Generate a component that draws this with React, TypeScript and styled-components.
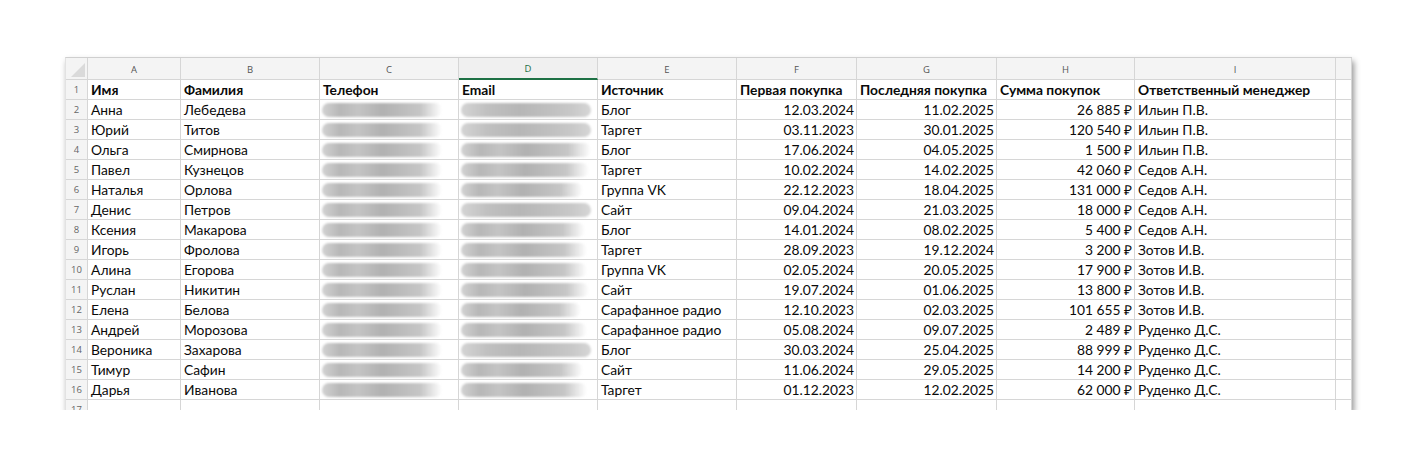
import React from 'react';
import styled, { createGlobalStyle } from 'styled-components';

const GlobalStyle = createGlobalStyle`
  body {
    margin: 0;
    background: #ffffff;
    font-family: Lato, "Liberation Sans", sans-serif;
  }
`;

const COLS = [22, 93, 139, 139, 139, 139, 120, 140, 138, 201, 16];
const LETTERS = ['A', 'B', 'C', 'D', 'E', 'F', 'G', 'H', 'I', ''];

const Page = styled.div`
  padding: 57px 0 0 65px;
`;

const Sheet = styled.div`
  width: 1286px;
  height: 352px;
  overflow: hidden;
  background: #fff;
  border-top: 1px solid #cfcfcf;
  border-left: 1px solid #e2e2e2;
  box-shadow: 2px 4px 6px rgba(0, 0, 0, 0.42);
  display: grid;
  grid-template-columns: ${COLS.map((c) => `${c}px`).join(' ')};
  grid-auto-rows: 20px;
  grid-template-rows: 22px;
`;

const Corner = styled.div`
  background: #f4f4f4;
  border-right: 1px solid #d6d6d6;
  border-bottom: 1px solid #d6d6d6;
  position: relative;
  &::after {
    content: '';
    position: absolute;
    right: 2px;
    bottom: 2px;
    border-style: solid;
    border-width: 0 0 14px 14px;
    border-color: transparent transparent #dadada transparent;
  }
`;

const ColHead = styled.div<{ $active?: boolean }>`
  background: ${(p) => (p.$active ? '#f0f0f0' : '#f4f4f4')};
  border-right: 1px solid #d6d6d6;
  border-bottom: ${(p) => (p.$active ? '2px solid #1e7145' : '1px solid #d6d6d6')};
  color: ${(p) => (p.$active ? '#1e7145' : '#555')};
  font-family: "Open Sans", sans-serif;
  font-size: 9.5px;
  display: flex;
  align-items: center;
  justify-content: center;
  padding-top: 1px;
`;

const RowHead = styled.div`
  background: #f4f4f4;
  border-right: 1px solid #d6d6d6;
  border-bottom: 1px solid #d6d6d6;
  color: #666;
  font-family: "Open Sans", sans-serif;
  font-size: 9.5px;
  display: flex;
  align-items: center;
  justify-content: center;
`;

const Cell = styled.div<{ $bold?: boolean; $right?: boolean }>`
  border-right: 1px solid #d6d6d6;
  border-bottom: 1px solid #d6d6d6;
  font-size: 13.8px;
  font-weight: ${(p) => (p.$bold ? 700 : 400)};
  color: #0a0a0a;
  white-space: nowrap;
  overflow: hidden;
  display: flex;
  align-items: center;
  justify-content: ${(p) => (p.$right ? 'flex-end' : 'flex-start')};
  padding: 0 2px 0 3px;
`;

const Blur = styled.div<{ $w: number; $fade?: boolean }>`
  width: ${(p) => p.$w}px;
  height: 14px;
  border-radius: 7px;
  margin-left: -1px;
  background: ${(p) =>
    p.$fade
      ? 'linear-gradient(90deg, #d2d2d2 0%, #b7b7b7 15%, #c4c4c4 30%, #b1b1b1 50%, #bdbdbd 68%, #c6c6c6 82%, rgba(255,255,255,0) 100%)'
      : 'linear-gradient(90deg, #d4d4d4 0%, #c0c0c0 20%, #b6b6b6 45%, #bebebe 65%, #c8c8c8 85%, #d6d6d6 100%)'};
  filter: blur(1.2px);
`;

type Row = [string, string, string, string, string, string, string];

const ROWS: Row[] = [
  ['Анна', 'Лебедева', 'Блог', '12.03.2024', '11.02.2025', '26 885 ₽', 'Ильин П.В.'],
  ['Юрий', 'Титов', 'Таргет', '03.11.2023', '30.01.2025', '120 540 ₽', 'Ильин П.В.'],
  ['Ольга', 'Смирнова', 'Блог', '17.06.2024', '04.05.2025', '1 500 ₽', 'Ильин П.В.'],
  ['Павел', 'Кузнецов', 'Таргет', '10.02.2024', '14.02.2025', '42 060 ₽', 'Седов А.Н.'],
  ['Наталья', 'Орлова', 'Группа VK', '22.12.2023', '18.04.2025', '131 000 ₽', 'Седов А.Н.'],
  ['Денис', 'Петров', 'Сайт', '09.04.2024', '21.03.2025', '18 000 ₽', 'Седов А.Н.'],
  ['Ксения', 'Макарова', 'Блог', '14.01.2024', '08.02.2025', '5 400 ₽', 'Седов А.Н.'],
  ['Игорь', 'Фролова', 'Таргет', '28.09.2023', '19.12.2024', '3 200 ₽', 'Зотов И.В.'],
  ['Алина', 'Егорова', 'Группа VK', '02.05.2024', '20.05.2025', '17 900 ₽', 'Зотов И.В.'],
  ['Руслан', 'Никитин', 'Сайт', '19.07.2024', '01.06.2025', '13 800 ₽', 'Зотов И.В.'],
  ['Елена', 'Белова', 'Сарафанное радио', '12.10.2023', '02.03.2025', '101 655 ₽', 'Зотов И.В.'],
  ['Андрей', 'Морозова', 'Сарафанное радио', '05.08.2024', '09.07.2025', '2 489 ₽', 'Руденко Д.С.'],
  ['Вероника', 'Захарова', 'Блог', '30.03.2024', '25.04.2025', '88 999 ₽', 'Руденко Д.С.'],
  ['Тимур', 'Сафин', 'Сайт', '11.06.2024', '29.05.2025', '14 200 ₽', 'Руденко Д.С.'],
  ['Дарья', 'Иванова', 'Таргет', '01.12.2023', '12.02.2025', '62 000 ₽', 'Руденко Д.С.'],
];

const EMAIL: { w: number; fade: boolean }[] = [
  { w: 130, fade: false },
  { w: 130, fade: false },
  { w: 130, fade: true },
  { w: 128, fade: true },
  { w: 122, fade: true },
  { w: 130, fade: false },
  { w: 124, fade: true },
  { w: 126, fade: true },
  { w: 126, fade: true },
  { w: 128, fade: true },
  { w: 120, fade: true },
  { w: 126, fade: true },
  { w: 130, fade: false },
  { w: 122, fade: true },
  { w: 126, fade: true },
];

export default function App() {
  return (
    <Page>
      <GlobalStyle />
      <Sheet>
        <Corner />
        {LETTERS.map((l) => (
          <ColHead key={l || 'x'} $active={l === 'D'}>
            {l}
          </ColHead>
        ))}

        <RowHead>1</RowHead>
        {['Имя', 'Фамилия', 'Телефон', 'Email', 'Источник', 'Первая покупка', 'Последняя покупка', 'Сумма покупок', 'Ответственный менеджер'].map(
          (h) => (
            <Cell key={h} $bold>
              {h}
            </Cell>
          )
        )}
        <Cell />

        {ROWS.map((r, i) => (
          <React.Fragment key={i}>
            <RowHead>{i + 2}</RowHead>
            <Cell>{r[0]}</Cell>
            <Cell>{r[1]}</Cell>
            <Cell>
              <Blur $w={120} $fade />
            </Cell>
            <Cell>
              <Blur $w={EMAIL[i].w} $fade={EMAIL[i].fade} />
            </Cell>
            <Cell>{r[2]}</Cell>
            <Cell $right>{r[3]}</Cell>
            <Cell $right>{r[4]}</Cell>
            <Cell $right>{r[5]}</Cell>
            <Cell>{r[6]}</Cell>
            <Cell />
          </React.Fragment>
        ))}

        <RowHead>17</RowHead>
        {LETTERS.map((l) => (
          <Cell key={'e' + l} />
        ))}
      </Sheet>
    </Page>
  );
}
